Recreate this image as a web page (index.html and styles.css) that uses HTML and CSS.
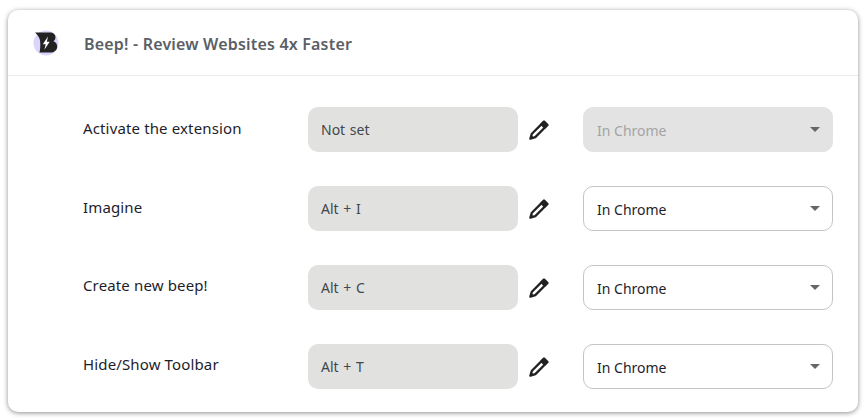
FILE: index.html
```html
<!DOCTYPE html>
<html lang="en">
<head>
<meta charset="utf-8">
<title>Beep! shortcuts</title>
<link rel="stylesheet" href="styles.css">
</head>
<body>
<svg class="defs" width="0" height="0" aria-hidden="true"><defs>
<symbol id="pencil" viewBox="0 0 20 20">
<path d="M15 1.600 18.400 5 6.300 17.100 1.400 18.600 2.900 13.700Z" fill="none" stroke="#222" stroke-width="2.300" stroke-linejoin="round"/>
<path d="M15 1.600 18.400 5 15.700 7.700 12.300 4.300Z" fill="#222" stroke="#222" stroke-width="2" stroke-linejoin="round"/>
<path d="M1.400 18.600 2.300 15 5 17.700Z" fill="#222"/>
</symbol>
</defs></svg>
<main class="card">
  <header class="card-head">
    <svg class="logo" width="26" height="26" viewBox="0 0 26 26" aria-hidden="true">
      <circle cx="13" cy="13" r="12.500" fill="#dcd5fb"/>
      <path d="M2 2.500H17C20 2.500 22.500 4.400 22.500 7.200 22.500 9 21.600 10.400 20.400 11.200 22.800 12 24.200 14 24.200 16.400 24.200 19.800 21.400 22.500 17.500 22.500H6.500C7.500 19 7.400 13 7 10.500 6.600 7.500 4.500 4.500 2 2.500Z" fill="#222"/>
      <path d="M15 6.500 9.800 14.200H12.700L11.400 19.800 16.700 11.700H13.800Z" fill="#fff"/>
    </svg>
    <h1 class="title">Beep! - Review Websites 4x Faster</h1>
  </header>
  <div class="rows">
    <div class="row">
      <span class="label">Activate the extension</span>
      <div class="key">Not set</div>
      <svg class="edit" width="20" height="20" aria-hidden="true"><use href="#pencil"/></svg>
      <div class="select disabled"><span>In Chrome</span><i class="caret"></i></div>
    </div>
    <div class="row">
      <span class="label">Imagine</span>
      <div class="key">Alt + I</div>
      <svg class="edit" width="20" height="20" aria-hidden="true"><use href="#pencil"/></svg>
      <div class="select"><span>In Chrome</span><i class="caret"></i></div>
    </div>
    <div class="row">
      <span class="label label-high">Create new beep!</span>
      <div class="key">Alt + C</div>
      <svg class="edit" width="20" height="20" aria-hidden="true"><use href="#pencil"/></svg>
      <div class="select"><span>In Chrome</span><i class="caret"></i></div>
    </div>
    <div class="row">
      <span class="label label-high">Hide/Show Toolbar</span>
      <div class="key">Alt + T</div>
      <svg class="edit" width="20" height="20" aria-hidden="true"><use href="#pencil"/></svg>
      <div class="select"><span>In Chrome</span><i class="caret"></i></div>
    </div>
  </div>
</main>
</body>
</html>
```
FILE: styles.css
```css
html, body {
  margin: 0;
  height: 100%;
  overflow: hidden;
  background: #fff;
}
body {
  padding: 10px 6px 0 8px;
  box-sizing: border-box;
  font-family: "Noto Sans", sans-serif;
  font-size: 14px;
  color: #1d1d2b;
}
.defs {
  position: absolute;
}
.card {
  height: 402px;
  box-sizing: border-box;
  background: #fff;
  border-radius: 10px;
  box-shadow: 0 1px 5px rgba(0, 0, 0, 0.45);
}
.card-head {
  height: 66px;
  box-sizing: border-box;
  display: flex;
  align-items: center;
  padding-left: 25px;
  border-bottom: 1px solid #ececec;
}
.logo {
  flex: none;
  margin-right: 25px;
}
.title {
  margin: 0 0 -2px;
  font-size: 16px;
  font-weight: 600;
  letter-spacing: 0.19px;
  color: #5b5f66;
}
.rows {
  display: flex;
  flex-direction: column;
  gap: 34px;
  padding: 31px 25px 0 75px;
}
.row {
  display: flex;
  align-items: center;
  height: 45px;
}
.label {
  width: 225px;
  flex: none;
  margin-top: -3px;
  font-size: 15px;
  letter-spacing: 0.14px;
}
.label-high {
  margin-top: -5px;
}
.key {
  width: 210px;
  height: 45px;
  flex: none;
  box-sizing: border-box;
  display: flex;
  align-items: center;
  padding-left: 13px;
  background: #e1e2e0;
  border-radius: 10px;
  color: #42464d;
  word-spacing: 1px;
}
.edit {
  flex: none;
  margin: 0 34px 0 11px;
}
.select {
  width: 250px;
  height: 45px;
  flex: none;
  box-sizing: border-box;
  display: flex;
  align-items: center;
  justify-content: space-between;
  padding: 2px 12px 0 13px;
  background: #fff;
  border: 1px solid #c4c4c4;
  border-radius: 10px;
}
.select.disabled {
  background: #e3e3e3;
  border-color: #e3e3e3;
  color: #a3a3a3;
}
.caret {
  width: 0;
  height: 0;
  margin-top: -3px;
  border-left: 5px solid transparent;
  border-right: 5px solid transparent;
  border-top: 5px solid #666;
}
```
